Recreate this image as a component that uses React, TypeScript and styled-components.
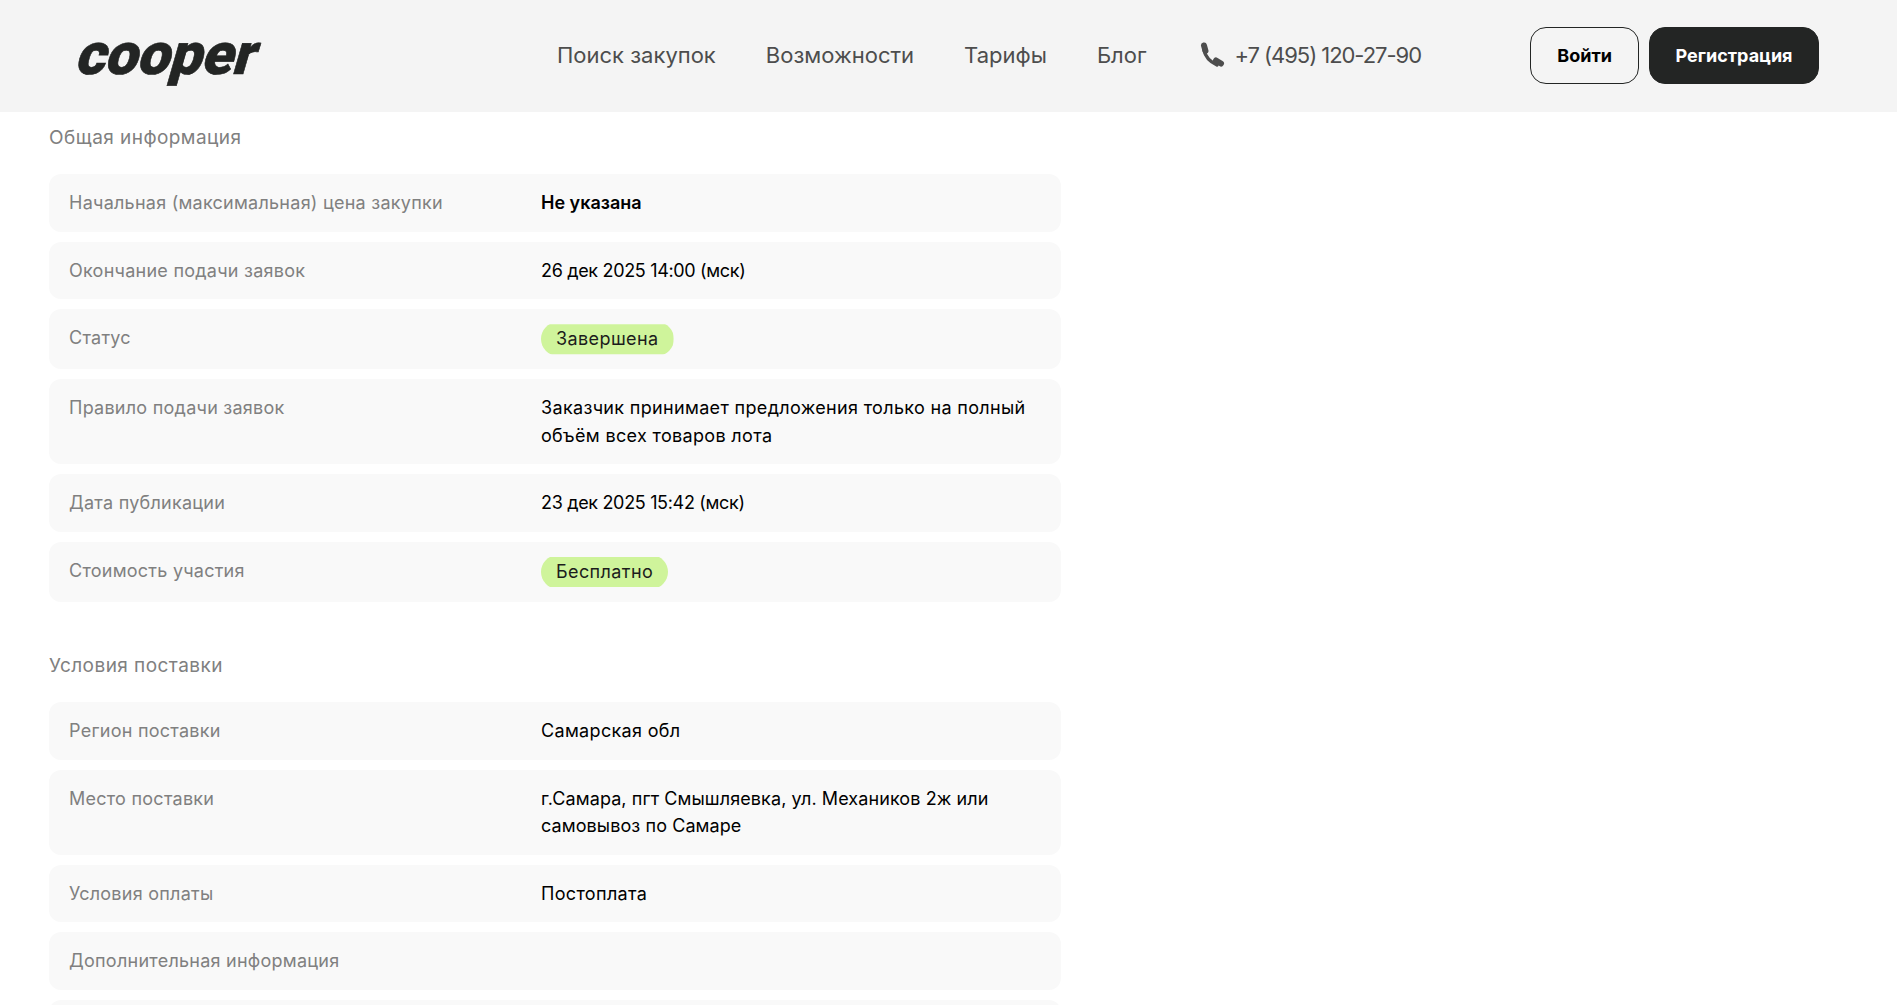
import React from 'react';
import styled, { createGlobalStyle } from 'styled-components';

const Global = createGlobalStyle`
  html, body {
    margin: 0;
    padding: 0;
    height: 100%;
    overflow: hidden;
    background: #fff;
  }
  body {
    font-family: Inter, "Noto Sans", sans-serif;
    color: #000;
  }
`;

const Header = styled.header`
  height: 112px;
  box-sizing: border-box;
  background: #f4f4f4;
  display: flex;
  align-items: center;
  padding: 0 78px 2px 79px;
`;
const Logo = styled.a`
  width: 179px;
  padding-bottom: 3px;
  font-family: Roboto, sans-serif;
  font-size: 58px;
  font-weight: 900;
  line-height: 40px;
  color: #232524;
  letter-spacing: -0.5px;
  -webkit-text-stroke: 0.6px #232524;
  transform: skewX(-16deg);
  transform-origin: left center;
`;
const Nav = styled.nav`
  display: flex;
  align-items: center;
  gap: 50px;
  margin-left: 299px;
  font-size: 22px;
  color: #4d4d4d;
`;
const Phone = styled.span`
  display: flex;
  align-items: center;
  gap: 10px;
  margin-left: 2px;
  letter-spacing: -1.05px;
`;
const Actions = styled.div`
  display: flex;
  gap: 10px;
  margin-left: auto;
`;
const Button = styled.button<{ $dark?: boolean }>`
  height: 57px;
  padding: 0 ${(p) => (p.$dark ? '25.5px' : '26px')};
  border-radius: 16px;
  border: 1px solid #232524;
  background: ${(p) => (p.$dark ? '#232524' : 'transparent')};
  color: ${(p) => (p.$dark ? '#fff' : '#000')};
  font-family: inherit;
  font-size: 18px;
  font-weight: 700;
`;

const Main = styled.main`
  width: 1012px;
  margin-left: 49px;
`;
const Title = styled.h2`
  margin: 0;
  height: 50px;
  padding-top: 13px;
  box-sizing: border-box;
  font-size: 19px;
  font-weight: 400;
  line-height: 26px;
  letter-spacing: 0.45px;
  color: #808080;
`;
const Section = styled.section`
  margin-bottom: 38px;
`;
const List = styled.div`
  margin-top: 12px;
  display: grid;
  gap: 10px;
`;
const Row = styled.div`
  display: grid;
  grid-template-columns: 472px 1fr;
  min-height: 27.6px;
  padding: 15px 20px;
  background: #f9f9f9;
  border-radius: 12px;
  font-size: 18px;
  line-height: 27.6px;
`;
const Label = styled.div`
  color: #808080;
  letter-spacing: 0.25px;
`;
const Value = styled.div<{ $bold?: boolean; $spacing?: string }>`
  font-weight: ${(p) => (p.$bold ? 600 : 400)};
  letter-spacing: ${(p) => p.$spacing || '0.33px'};
`;
const Badge = styled.span`
  display: block;
  width: fit-content;
  height: 34px;
  line-height: 34px;
  margin: -2px 0;
  padding: 0 15px;
  border-radius: 18px;
  background: #cff49b;
  color: #1c1c1c;
  letter-spacing: 0.4px;
  clip-path: inset(2px 0);
`;

const PhoneIcon = () => (
  <svg width="26" height="26" viewBox="0 0 26 26" fill="none" stroke="#4d4d4d" strokeLinecap="round">
    <path d="M5 8 Q7 18 18 23" strokeWidth="3.5" />
    <path d="M5 3.500 L6.500 9" strokeWidth="6" />
    <path d="M17 18.500 L22 21.500" strokeWidth="6" />
  </svg>
);

type Item = { label: string; value?: string; badge?: boolean; bold?: boolean; spacing?: string };

const general: Item[] = [
  { label: 'Начальная (максимальная) цена закупки', value: 'Не указана', bold: true, spacing: '0' },
  { label: 'Окончание подачи заявок', value: '26 дек 2025 14:00 (мск)', spacing: '-0.33px' },
  { label: 'Статус', value: 'Завершена', badge: true },
  { label: 'Правило подачи заявок', value: 'Заказчик принимает предложения только на полный объём всех товаров лота' },
  { label: 'Дата публикации', value: '23 дек 2025 15:42 (мск)', spacing: '-0.33px' },
  { label: 'Стоимость участия', value: 'Бесплатно', badge: true },
];

const delivery: Item[] = [
  { label: 'Регион поставки', value: 'Самарская обл' },
  { label: 'Место поставки', value: 'г.Самара, пгт Смышляевка, ул. Механиков 2ж или самовывоз по Самаре', spacing: '0.09px' },
  { label: 'Условия оплаты', value: 'Постоплата' },
  { label: 'Дополнительная информация' },
  { label: '' },
];

const Rows = ({ items }: { items: Item[] }) => (
  <List>
    {items.map((r, i) => (
      <Row key={i}>
        <Label>{r.label}</Label>
        <Value $bold={r.bold} $spacing={r.spacing}>
          {r.badge ? <Badge>{r.value}</Badge> : r.value}
        </Value>
      </Row>
    ))}
  </List>
);

export default function App() {
  return (
    <>
      <Global />
      <Header>
        <Logo>cooper</Logo>
        <Nav>
          <span>Поиск закупок</span>
          <span>Возможности</span>
          <span>Тарифы</span>
          <span>Блог</span>
          <Phone>
            <PhoneIcon />
            +7 (495) 120-27-90
          </Phone>
        </Nav>
        <Actions>
          <Button>Войти</Button>
          <Button $dark>Регистрация</Button>
        </Actions>
      </Header>
      <Main>
        <Section>
          <Title>Общая информация</Title>
          <Rows items={general} />
        </Section>
        <Section>
          <Title>Условия поставки</Title>
          <Rows items={delivery} />
        </Section>
      </Main>
    </>
  );
}
